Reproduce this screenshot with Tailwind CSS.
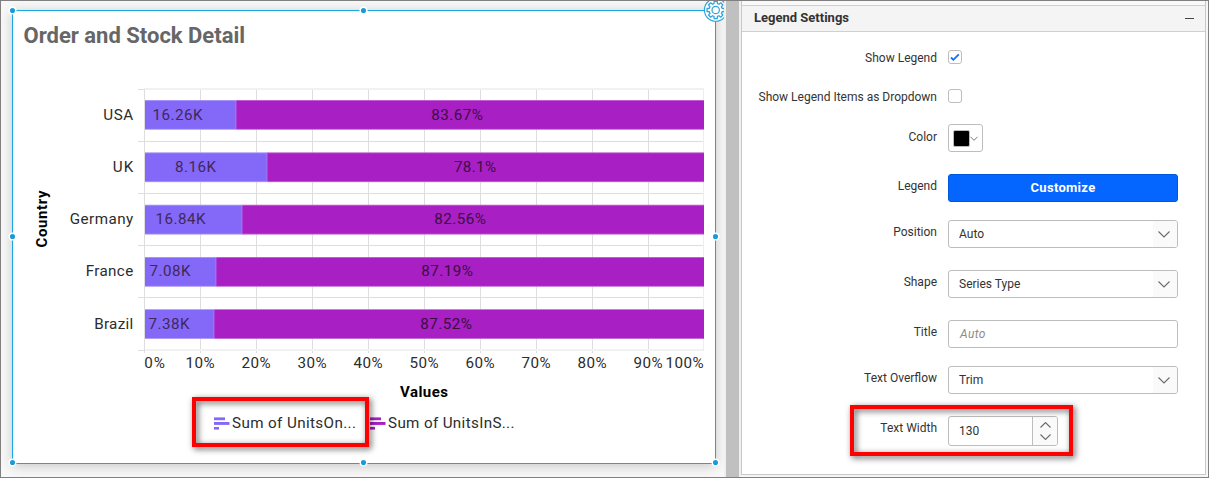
<!DOCTYPE html>
<html lang="en">
<head>
<meta charset="utf-8">
<title>Order and Stock Detail</title>
<script src="https://cdn.jsdelivr.net/npm/@tailwindcss/browser@4"></script>
</head>
<body class="font-['Roboto',sans-serif]">
<div class="relative flex h-[478px] w-[1209px] overflow-hidden border border-[#808080] bg-[#f6f6f6]">
  <!-- Chart widget -->
  <section class="relative h-full w-[723px] shrink-0 overflow-hidden bg-[#f8f8f8] pt-[9px] pl-[11px]">
    <div class="h-[454px] w-[704px] border border-[#14a9e4] bg-white shadow-[0_2px_12px_rgba(0,0,0,0.2)]">
      <h1 class="h-[50px] pt-[10px] pl-[10.5px] text-[22px] leading-[30px] font-bold text-[#666]"><span class="inline-block whitespace-nowrap">Order and Stock Detail</span></h1>
      <svg class="block" width="702" height="402" viewBox="13 61 702 402" font-family="Roboto, sans-serif" font-size="15.200">
        <g id="grid" shape-rendering="crispEdges"></g>
        <g id="bars"></g>
        <g id="labels" fill="#2c2c2c"></g>
        <text x="424" y="397" text-anchor="middle" font-size="15" font-weight="700" fill="#000" textLength="48">Values</text>
        <text transform="translate(47 219) rotate(-90)" text-anchor="middle" font-size="15" font-weight="700" fill="#000" textLength="57">Country</text>
        <g fill="#8469f8"><rect x="214" y="417.4" width="11" height="2.8"/><rect x="214" y="422" width="15.5" height="2.9"/><rect x="214" y="427" width="5" height="2.6"/></g>
        <g fill="#a81fc4"><rect x="370" y="417.4" width="11" height="2.8"/><rect x="370" y="422" width="15.5" height="2.9"/><rect x="370" y="427" width="5" height="2.6"/></g>
        <text x="232" y="428" fill="#2c2c2c" textLength="124">Sum of UnitsOn...</text>
        <text x="388" y="428" fill="#2c2c2c" textLength="126.500">Sum of UnitsInS...</text>
      </svg>
    </div>
    <!-- Selection handles and settings gear -->
    <svg class="absolute top-0 left-0" width="723" height="476" viewBox="1 1 723 476">
      <g fill="#1b9ad6" stroke="#fff" stroke-width="1.500">
        <circle cx="12.500" cy="10.500" r="3.300"/><circle cx="363.500" cy="10.500" r="3.300"/>
        <circle cx="12.500" cy="236.500" r="3.300"/><circle cx="715.500" cy="236.500" r="3.300"/>
        <circle cx="12.500" cy="462.500" r="3.300"/><circle cx="363.500" cy="462.500" r="3.300"/><circle cx="715.500" cy="462.500" r="3.300"/>
      </g>
      <circle cx="715.700" cy="10" r="11.300" fill="#fff" stroke="#2da5dc" stroke-width="1.100"/>
      <path id="gear" fill="none" stroke="#2da5dc" stroke-width="1.300" stroke-linejoin="round"/>
      <circle cx="715.700" cy="10" r="3.700" fill="none" stroke="#2da5dc" stroke-width="1.200"/>
    </svg>
  </section>
  <div class="w-0.5 shrink-0 bg-[#f0f0f0]"></div>
  <div class="w-[13px] shrink-0 bg-[#c0c0c0]"></div>
  <div class="w-0.5 shrink-0 bg-[#f0f0f0]"></div>
  <!-- Settings panel -->
  <aside class="mb-0.5 flex w-[465px] shrink-0 flex-col border-x border-b border-[#c8c8c8] bg-white text-[12px] text-[#333]">
    <div class="h-1 bg-[#f9f9f9]"></div>
    <div class="flex h-[27px] shrink-0 items-center justify-between border-y border-[#d0d0d0] bg-[#f4f4f4] pr-[11px] pl-3">
      <h2 class="-mt-px text-[13px] leading-4 font-bold"><span class="inline-block">Legend Settings</span></h2>
      <span class="h-px w-[9px] bg-[#444]"></span>
    </div>
    <div class="flex flex-col pt-[18px]">
      <div class="mb-[25px] flex h-3.5 items-center gap-[11px]">
        <label class="w-[195px] pt-px text-right">Show Legend</label>
        <span class="flex size-3.5 items-center justify-center rounded-[3px] border border-[#bdbdbd]"><svg width="10" height="9" viewBox="0 0 10 9" fill="none" stroke="#1769ff" stroke-width="1.800"><path d="M1 4.500l2.400 2.300L8.800 1.300"/></svg></span>
      </div>
      <div class="mb-[21px] flex h-3.5 items-center gap-[11px]">
        <label class="w-[195px] pt-px text-right whitespace-nowrap">Show Legend Items as Dropdown</label>
        <span class="size-3.5 rounded-[3px] border border-[#bdbdbd]"></span>
      </div>
      <div class="mb-[22px] flex h-7 items-center gap-[11px]">
        <label class="w-[195px] pb-[3px] text-right">Color</label>
        <span class="flex h-7 w-[35px] items-center rounded-[3px] border border-[#bdbdbd] pl-1"><span class="size-[17px] rounded-[2px] border border-[#bbb] bg-black"></span><svg class="-ml-px" width="10" height="7" viewBox="0 0 10 7" fill="none" stroke="#777"><path d="M1.500 1.800L5 5.300l3.500-3.500"/></svg></span>
      </div>
      <div class="mb-[18px] flex h-7 items-center gap-[11px]">
        <label class="w-[195px] pb-[5px] text-right">Legend</label>
        <button class="h-7 w-[230px] rounded-[3px] border border-[#0057d9] bg-[#0565ff] text-[13px] font-bold tracking-[0.3px] text-white">Customize</button>
      </div>
      <div class="mb-[22px] flex h-7 items-center gap-[11px]">
        <label class="w-[195px] pb-[5px] text-right">Position</label>
        <div class="flex h-7 w-[230px] items-center justify-between overflow-hidden rounded-[3px] border border-[#bdbdbd] pl-2.5">Auto<span class="flex h-full w-6 items-center bg-[#fafafa] pl-[5px]"><svg width="12" height="7" viewBox="0 0 12 7" fill="none" stroke="#6b6b6b" stroke-width="1.100"><path d="M.5.500L6 6 11.500.500"/></svg></span></div>
      </div>
      <div class="mb-[22px] flex h-7 items-center gap-[11px]">
        <label class="w-[195px] pb-[5px] text-right">Shape</label>
        <div class="flex h-7 w-[230px] items-center justify-between overflow-hidden rounded-[3px] border border-[#bdbdbd] pl-2.5">Series Type<span class="flex h-full w-6 items-center bg-[#fafafa] pl-[5px]"><svg width="12" height="7" viewBox="0 0 12 7" fill="none" stroke="#6b6b6b" stroke-width="1.100"><path d="M.5.500L6 6 11.500.500"/></svg></span></div>
      </div>
      <div class="mb-[18px] flex h-7 items-center gap-[11px]">
        <label class="w-[195px] pb-[5px] text-right">Title</label>
        <div class="flex h-7 w-[230px] items-center rounded-[3px] border border-[#bdbdbd] pl-[11px] tracking-[0.4px] text-[#8c8c8c] italic">Auto</div>
      </div>
      <div class="mb-[22px] flex h-7 items-center gap-[11px]">
        <label class="w-[195px] pb-[5px] text-right">Text Overflow</label>
        <div class="flex h-7 w-[230px] items-center justify-between overflow-hidden rounded-[3px] border border-[#bdbdbd] pl-2.5">Trim<span class="flex h-full w-6 items-center bg-[#fafafa] pl-[5px]"><svg width="12" height="7" viewBox="0 0 12 7" fill="none" stroke="#6b6b6b" stroke-width="1.100"><path d="M.5.500L6 6 11.500.500"/></svg></span></div>
      </div>
      <div class="flex h-[30px] items-center gap-[11px]">
        <label class="w-[195px] pb-[7px] text-right">Text Width</label>
        <div class="flex h-[30px] w-[110px] items-center justify-between overflow-hidden rounded-[3px] border border-[#bdbdbd] pl-2.5">130<span class="flex h-full w-[25px] flex-col items-center justify-center gap-[6px] border-l border-[#bdbdbd] bg-[#fafafa]"><svg width="11" height="6" viewBox="0 0 11 6" fill="none" stroke="#6b6b6b" stroke-width="1.100"><path d="M.5 5.500l5-5 5 5"/></svg><svg width="11" height="6" viewBox="0 0 11 6" fill="none" stroke="#6b6b6b" stroke-width="1.100"><path d="M.5.500l5 5 5-5"/></svg></span></div>
      </div>
    </div>
  </aside>
  <!-- Highlight frames -->
  <div class="absolute top-[396px] left-[191px] h-[50px] w-[177px] border-4 border-[#fe0000] drop-shadow-[2px_2px_3px_rgba(0,0,0,0.65)]"></div>
  <div class="absolute top-[404px] left-[849px] h-[51px] w-[223px] border-4 border-[#fe0000] drop-shadow-[2px_2px_3px_rgba(0,0,0,0.65)]"></div>
</div>
<script>
// name, name width, value, value x, value width, percent, percent x, split x, bar top, baseline
const rows = [
  ['USA', 30, '16.26K', 177.5, 50, '83.67%', 457, 236, 100, 120],
  ['UK', 20.5, '8.16K', 195.5, 41, '78.1%', 475, 267, 152.4, 172],
  ['Germany', 63.5, '16.84K', 180.5, 50, '82.56%', 460, 242, 204.8, 224],
  ['France', 47.5, '7.08K', 170, 41, '87.19%', 447, 216, 257, 276],
  ['Brazil', 39, '7.38K', 169, 41, '87.52%', 446, 214, 309.2, 329]
];
let grid = '', bars = '', labels = '';
const line = (x, y, w, h, c) => `<rect x="${x}" y="${y}" width="${w}" height="${h}" fill="${c}"/>`;
[141, 193, 245, 297].forEach(y => grid += line(138, y, 566, 1, '#dedede'));
for (let i = 1; i < 10; i++) grid += line(144 + 56 * i, 89, 1, 264, '#dedede');
grid += line(144, 88, 560, 2, '#f1f1f1') + line(144, 349, 560, 2, '#f1f1f1') + line(703, 89, 1, 261, '#eee');
grid += line(138, 89, 6, 1, '#dedede') + line(138, 350, 6, 1, '#dedede') + line(144, 89, 1, 264, '#dedede');
for (const [name, nw, v, vx, vw, pct, px, split, y, base] of rows) {
  bars += `<rect x="145" y="${y}" width="${split - 145}" height="29.7" fill="#8469f8"/><rect x="${split}" y="${y}" width="${704 - split}" height="29.7" fill="#a81fc4"/><rect x="${split - .6}" y="${y}" width="1" height="29.7" fill="#a77af0"/>`;
  bars += `<rect x="145" y="${y}" width="559" height=".8" fill="#fff" fill-opacity=".35"/><rect x="145" y="${y + 28.9}" width="559" height=".8" fill="#fff" fill-opacity=".35"/>`;
  labels += `<text x="133.2" y="${base}" text-anchor="end" textLength="${nw}">${name}</text>`;
  labels += `<text x="${vx}" y="${base}" text-anchor="middle" fill="#41285a" textLength="${vw}">${v}</text>`;
  labels += `<text x="${px}" y="${base}" text-anchor="middle" fill="#3c0e42" textLength="${pct.length > 5 ? 51.5 : 42}">${pct}</text>`;
}
for (let i = 0; i <= 10; i++) {
  const x = i === 0 ? 154.5 : i === 10 ? 684.5 : 144 + 56 * i;
  labels += `<text x="${x}" y="368" text-anchor="middle" textLength="${i === 0 ? 20.5 : i === 10 ? 38 : 29}">${i * 10}%</text>`;
}
document.getElementById('grid').innerHTML = grid;
document.getElementById('bars').innerHTML = bars;
document.getElementById('labels').innerHTML = labels;
let d = '';
for (let i = 0; i < 8; i++) {
  [[-.27, 6.6], [-.17, 8.8], [.17, 8.8], [.27, 6.6]].forEach(([a, r], j) => {
    const t = i * Math.PI / 4 + a;
    d += (i + j ? 'L' : 'M') + (715.7 + r * Math.cos(t)).toFixed(2) + ' ' + (10 + r * Math.sin(t)).toFixed(2);
  });
}
document.getElementById('gear').setAttribute('d', d + 'Z');
</script>
</body>
</html>
